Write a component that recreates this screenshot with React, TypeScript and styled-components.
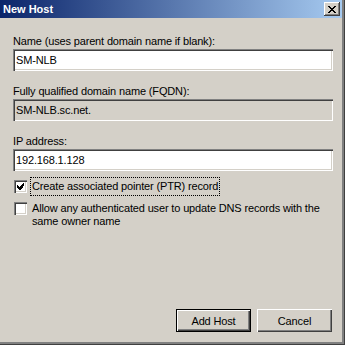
import React, {FC} from 'react';
import styled, {createGlobalStyle} from 'styled-components';

const GlobalStyle = createGlobalStyle`
  html, body {
    margin: 0;
    padding: 0;
    background: #d4d0c8;
  }
  body {
    font-family: "Liberation Sans", Arial, sans-serif;
    font-size: 11px;
    letter-spacing: -0.15px;
    color: #000;
  }
`

const CheckGlyph: FC = () => (
    <svg width="7" height="7" viewBox="0 0 7 7" shapeRendering="crispEdges">
        <path fill="#000" d="M6 0h1v3h-1zM5 1h1v4h-1zM4 2h1v4h-1zM3 3h1v4h-1zM2 4h1v3h-1zM1 3h1v3h-1zM0 2h1v3h-1z"/>
    </svg>
);

const CloseGlyph: FC = () => (
    <svg width="8" height="7" viewBox="0 0 8 7" shapeRendering="crispEdges">
        <path fill="#000"
              d="M0 0h2v1h-2zM6 0h2v1h-2zM1 1h2v1h-2zM5 1h2v1h-2zM2 2h4v1h-4zM3 3h2v1h-2zM2 4h4v1h-4zM1 5h2v1h-2zM5 5h2v1h-2zM0 6h2v1h-2zM6 6h2v1h-2z"/>
    </svg>
);

interface ICheckProps {
    checked?: boolean;
    focused?: boolean;
    children: React.ReactNode;
}

const CheckOption: FC<ICheckProps> = ({checked, focused, children}) => (
    <CheckRow>
        <Box>{checked && <CheckGlyph/>}</Box>
        <CheckText $focused={focused}>{children}</CheckText>
    </CheckRow>
);

const App: FC = () => {
    return (
        <>
            <GlobalStyle/>
            <Window>
                <TitleBar>
                    <Title>New Host</Title>
                    <CloseButton><CloseGlyph/></CloseButton>
                </TitleBar>

                <Body>
                    <Field>
                        <Label>Name (uses parent domain name if blank):</Label>
                        <TextBox defaultValue="SM-NLB"/>
                    </Field>
                    <Field>
                        <Label>Fully qualified domain name (FQDN):</Label>
                        <TextBox $readOnly readOnly value="SM-NLB.sc.net."/>
                    </Field>
                    <Field>
                        <Label>IP address:</Label>
                        <TextBox defaultValue="192.168.1.128"/>
                    </Field>

                    <Checks>
                        <CheckOption checked focused>Create associated pointer (PTR) record</CheckOption>
                        <CheckOption>
                            Allow any authenticated user to update DNS records with the<br/>same owner name
                        </CheckOption>
                    </Checks>

                    <Buttons>
                        <Button $default>Add Host</Button>
                        <Button>Cancel</Button>
                    </Buttons>
                </Body>
            </Window>
        </>
    );
};

const Window = styled.div`
  width: 345px;
  height: 345px;
  box-sizing: border-box;
  display: flex;
  flex-direction: column;
  background: #d4d0c8;
  border-right: 3px solid #808080;
  border-bottom: 3px solid #808080;
  box-shadow: inset -1px -1px 0 #d4d0c8;
  position: relative;

  &::after {
    content: "";
    position: absolute;
    right: -3px;
    bottom: -3px;
    width: 345px;
    height: 345px;
    box-shadow: inset -1px -1px 0 #404040;
    pointer-events: none;
  }
`

const TitleBar = styled.div`
  height: 18px;
  display: flex;
  align-items: center;
  justify-content: space-between;
  padding: 0 2px 0 3px;
  background: linear-gradient(to right, #0a246a, #a6caf0);
`

const Title = styled.span`
  color: #fff;
  font-weight: bold;
  font-size: 11px;
  letter-spacing: 0;
  line-height: 13px;
`

const CloseButton = styled.div`
  width: 16px;
  height: 14px;
  box-sizing: border-box;
  display: flex;
  align-items: center;
  justify-content: center;
  background: #d4d0c8;
  box-shadow: inset -1px -1px 0 #404040, inset 1px 1px 0 #fff, inset -2px -2px 0 #808080;
`

const Body = styled.div`
  flex: 1;
  display: flex;
  flex-direction: column;
  padding: 17px 9px 10px 13px;
`

const Field = styled.div`
  display: flex;
  flex-direction: column;
  margin-bottom: 14px;
`

const Label = styled.label`
  line-height: 13px;
  margin-bottom: 1px;
`

const TextBox = styled.input<{ $readOnly?: boolean }>`
  height: 22px;
  box-sizing: border-box;
  width: 100%;
  margin: 0;
  padding: 0 3px;
  border: none;
  outline: none;
  font-family: inherit;
  font-size: 11px;
  letter-spacing: inherit;
  color: #000;
  background: ${p => p.$readOnly ? '#d4d0c8' : '#fff'};
  box-shadow: inset 1px 1px 0 #808080, inset 2px 2px 0 #404040,
  inset -1px -1px 0 #fff, inset -2px -2px 0 #d4d0c8;
`

const Checks = styled.div`
  display: flex;
  flex-direction: column;
  margin-top: -8px;
  gap: 3px;
`

const CheckRow = styled.div`
  display: flex;
  align-items: flex-start;
`

const Box = styled.span`
  width: 13px;
  height: 13px;
  box-sizing: border-box;
  flex-shrink: 0;
  margin: 3px 3px 0 1px;
  display: flex;
  align-items: center;
  justify-content: center;
  background: #fff;
  box-shadow: inset 1px 1px 0 #808080, inset 2px 2px 0 #404040,
  inset -1px -1px 0 #fff, inset -2px -2px 0 #d4d0c8;
`

const CheckText = styled.span<{ $focused?: boolean }>`
  line-height: 13px;
  padding: 2px 1px;
  border: 1px dotted ${p => p.$focused ? '#000' : 'transparent'};
`

const Buttons = styled.div`
  margin-top: auto;
  display: flex;
  justify-content: flex-end;
  gap: 6px;
  margin-right: 1px;
`

const Button = styled.button<{ $default?: boolean }>`
  width: 75px;
  height: 23px;
  margin: 0;
  padding: 0;
  border: ${p => p.$default ? '1px solid #000' : 'none'};
  font-family: inherit;
  font-size: 11px;
  letter-spacing: inherit;
  color: #000;
  background: #d4d0c8;
  box-shadow: inset 1px 1px 0 #fff, inset -1px -1px 0 #404040, inset -2px -2px 0 #808080;
`

export default App;
